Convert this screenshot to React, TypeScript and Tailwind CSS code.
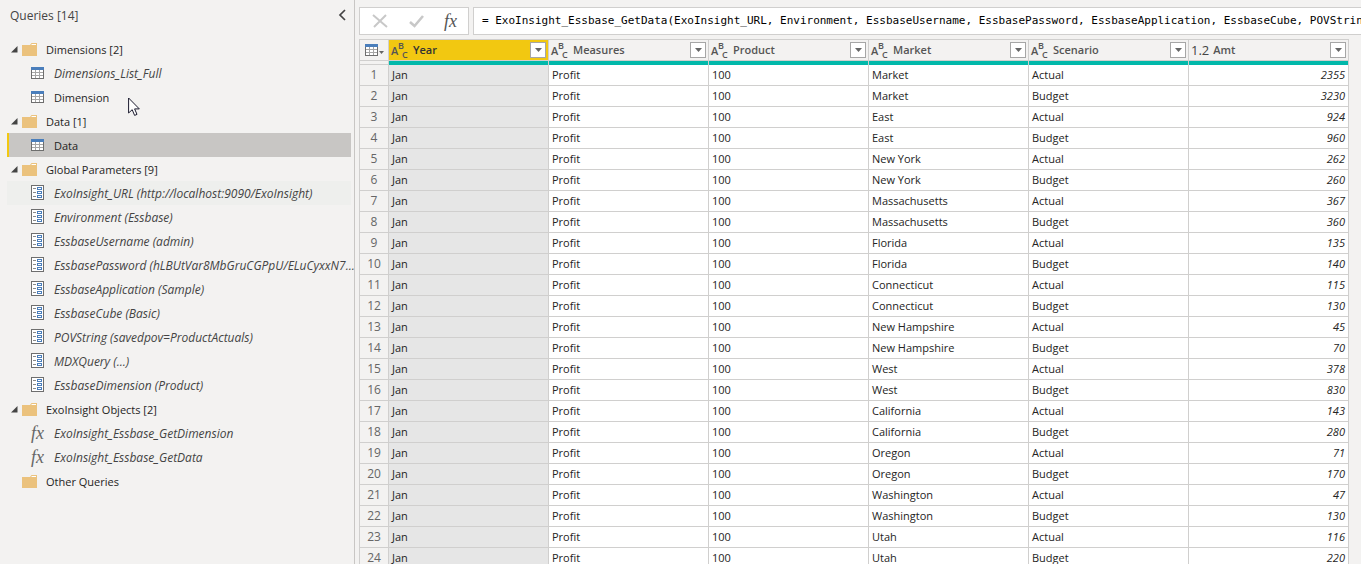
import React, { useState } from 'react';
import clsx from 'clsx';

type QueryKind = 'table' | 'param' | 'fn';

interface Query {
  name: string;
  kind: QueryKind;
  loaded?: boolean;
}

interface QueryGroup {
  title: string;
  queries: Query[];
}

const GROUPS: QueryGroup[] = [
  {
    title: 'Dimensions [2]',
    queries: [
      { name: 'Dimensions_List_Full', kind: 'table' },
      { name: 'Dimension', kind: 'table', loaded: true },
    ],
  },
  {
    title: 'Data [1]',
    queries: [{ name: 'Data', kind: 'table', loaded: true }],
  },
  {
    title: 'Global Parameters [9]',
    queries: [
      { name: 'ExoInsight_URL (http://localhost:9090/ExoInsight)', kind: 'param' },
      { name: 'Environment (Essbase)', kind: 'param' },
      { name: 'EssbaseUsername (admin)', kind: 'param' },
      { name: 'EssbasePassword (hLBUtVar8MbGruCGPpU/ELuCyxxN7...', kind: 'param' },
      { name: 'EssbaseApplication (Sample)', kind: 'param' },
      { name: 'EssbaseCube (Basic)', kind: 'param' },
      { name: 'POVString (savedpov=ProductActuals)', kind: 'param' },
      { name: 'MDXQuery (...)', kind: 'param' },
      { name: 'EssbaseDimension (Product)', kind: 'param' },
    ],
  },
  {
    title: 'ExoInsight Objects [2]',
    queries: [
      { name: 'ExoInsight_Essbase_GetDimension', kind: 'fn' },
      { name: 'ExoInsight_Essbase_GetData', kind: 'fn' },
    ],
  },
  { title: 'Other Queries', queries: [] },
];

const COLUMNS = ['Year', 'Measures', 'Product', 'Market', 'Scenario', 'Amt'];

// market, actual, budget
const MARKETS: [string, number, number][] = [
  ['Market', 2355, 3230],
  ['East', 924, 960],
  ['New York', 262, 260],
  ['Massachusetts', 367, 360],
  ['Florida', 135, 140],
  ['Connecticut', 115, 130],
  ['New Hampshire', 45, 70],
  ['West', 378, 830],
  ['California', 143, 280],
  ['Oregon', 71, 170],
  ['Washington', 47, 130],
  ['Utah', 116, 220],
];

const ROWS = MARKETS.flatMap(([market, actual, budget]) => [
  ['Jan', 'Profit', '100', market, 'Actual', String(actual)],
  ['Jan', 'Profit', '100', market, 'Budget', String(budget)],
]);

const FolderIcon = () => (
  <svg className="h-[13px] w-4 shrink-0" viewBox="0 0 16 13" aria-hidden="true">
    <path d="M0 2h8l1.5-2H15v13H0z" fill="#ebc27d" />
    <path d="M9.5 1.5h4.5" stroke="#fff" strokeWidth="1" />
  </svg>
);

const TableIcon = () => (
  <svg className="h-3 w-[13px] shrink-0" viewBox="0 0 13 12" shapeRendering="crispEdges" aria-hidden="true">
    <path d="M0 0h13v12H0z" fill="#6e6e6e" />
    <path d="M0 0h13v3H0z" fill="#4a7ebb" />
    <path d="M1 3h11v8H1z" fill="#a6a6a6" />
    <path d="M1 3h3v2H1zM5 3h3v2H5zM9 3h3v2H9zM1 6h3v2H1zM5 6h3v2H5zM9 6h3v2H9zM1 9h3v2H1zM5 9h3v2H5zM9 9h3v2H9z" fill="#fff" />
  </svg>
);

const ParamIcon = () => (
  <svg className="mb-px h-[15px] w-[13px] shrink-0" viewBox="0 0 13 15" fill="none" shapeRendering="crispEdges" aria-hidden="true">
    <path d="M.5.5h12v14H.5z" fill="#fff" stroke="#6e6e6e" />
    <path d="M2 3.5h3M2 7.5h3M2 11.5h3" stroke="#8a8a8a" />
    <path d="M6.5 2.5h4v2h-4zM6.5 6.5h4v2h-4zM6.5 10.5h4v2h-4z" stroke="#4a7ebb" />
  </svg>
);

const FxIcon = ({ className }: { className: string }) => (
  <span className={clsx("shrink-0 font-['Liberation_Serif',serif] text-[18px] leading-5 italic", className)}>fx</span>
);

const AbcIcon = () => (
  <svg className="h-[18px] w-[18px] shrink-0 overflow-visible" viewBox="0 0 18 18" aria-hidden="true">
    <text className="font-['Open_Sans',sans-serif] font-semibold" fill="#555" x="0" y="14" fontSize="11">
      A<tspan x="7" y="8" fontSize="9">B</tspan><tspan x="11" y="17" fontSize="9">C</tspan>
    </text>
  </svg>
);

const Caret = () => (
  <svg className="h-1 w-[7px]" viewBox="0 0 7 4" aria-hidden="true">
    <path d="M0 0h7L3.5 4z" fill="#666" />
  </svg>
);

const QueryIcon = ({ kind }: { kind: QueryKind }) => {
  if (kind === 'table') return <TableIcon />;
  if (kind === 'param') return <ParamIcon />;
  return <FxIcon className="w-[13px] text-[#666]" />;
};

interface SidebarProps {
  selected: string;
  onSelect: (name: string) => void;
}

const Sidebar: React.FC<SidebarProps> = ({ selected, onSelect }) => (
  <aside className="relative w-[355px] shrink-0 border-r border-[#c8c6c4] pl-[7px] pr-[3px]">
    <div className="flex h-[30px] items-center justify-between pl-[3px] pr-[5px]">
      <h2 className="pt-0.5 text-[12px] text-[#444]">Queries [14]</h2>
      <button aria-label="Collapse pane">
        <svg className="h-3 w-2" viewBox="0 0 8 12" fill="none" stroke="#444" strokeWidth="1.7">
          <path d="M7 1L2 6l5 5" />
        </svg>
      </button>
    </div>

    <ul className="pt-[7px]">
      {GROUPS.map(group => (
        <li key={group.title}>
          <button className="flex h-6 w-full items-center pl-1 text-[11px] text-[#252423]">
            <svg className="mr-1 h-[7px] w-[7px] shrink-0" viewBox="0 0 7 7" aria-hidden="true">
              {group.queries.length > 0 && <path d="M6.5 0v6.5H0z" fill="#444" />}
            </svg>
            <FolderIcon />
            <span className="ml-2 pt-0.5">{group.title}</span>
          </button>
          <ul>
            {group.queries.map(query => (
              <li key={query.name}>
                <button
                  onClick={() => onSelect(query.name)}
                  className={clsx(
                    'flex h-6 w-full items-center gap-[10px] border-l-2 pl-[22px] whitespace-nowrap',
                    query.name === selected ? 'border-[#f2c811] bg-[#c8c6c4]' : 'border-transparent',
                    query.name.startsWith('ExoInsight_URL') && 'bg-[#eeefed]',
                    query.loaded ? 'text-[11px] text-[#252423]' : 'text-[12px] text-[#444] italic'
                  )}
                >
                  <QueryIcon kind={query.kind} />
                  <span className="pt-0.5">{query.name}</span>
                </button>
              </li>
            ))}
          </ul>
        </li>
      ))}
    </ul>

    {/* pointer */}
    <svg className="absolute left-[128px] top-[97px] h-5 w-3" viewBox="0 0 12 20" aria-hidden="true">
      <path d="M.6 1v15l3.6-3.3 2.4 5.7 2.4-1-2.4-5.5h4.7z" fill="#fff" stroke="#1a1a2e" />
    </svg>
  </aside>
);

const FormulaBar = () => (
  <div className="flex h-7 shrink-0 gap-1">
    <div className="flex w-[110px] shrink-0 items-center justify-between border border-[#d0cfce] bg-white pl-3 pr-[11px]">
      <button aria-label="Cancel">
        <svg className="h-[14px] w-4" viewBox="0 0 16 14" fill="none" stroke="#c8c8c8" strokeWidth="2">
          <path d="M1 1l14 12M14 1L2 13" />
        </svg>
      </button>
      <button aria-label="Commit">
        <svg className="h-[13px] w-[15px]" viewBox="0 0 15 13" fill="none" stroke="#c8c8c8" strokeWidth="2.6">
          <path d="M1 7l4.5 4L14 1" />
        </svg>
      </button>
      <button aria-label="Insert step">
        <FxIcon className="text-[#555]" />
      </button>
    </div>
    <input
      aria-label="Formula"
      className="min-w-0 flex-1 border border-r-0 border-[#d0cfce] bg-white pl-2 font-['DejaVu_Sans_Mono',monospace] text-[11px] text-black outline-none"
      defaultValue="= ExoInsight_Essbase_GetData(ExoInsight_URL, Environment, EssbaseUsername, EssbasePassword, EssbaseApplication, EssbaseCube, POVString"
    />
  </div>
);

const DataGrid = () => (
  <table className="w-[990px] table-fixed border-separate border-spacing-0 border-l border-t border-[#d0cfce] text-[11px] leading-5 text-[#252423]">
    <colgroup>
      <col className="w-[29px]" />
      {COLUMNS.map(col => <col key={col} className="w-40" />)}
    </colgroup>
    <thead>
      <tr className="h-[21px]">
        <th className="border-b border-r border-[#d0cfce] p-0">
          <button aria-label="Table options" className="flex h-5 w-full items-center gap-px pl-[5px]">
            <TableIcon />
            <svg className="mt-1 h-[3px] w-[5px]" viewBox="0 0 5 3"><path d="M0 0h5L2.5 3z" fill="#666" /></svg>
          </button>
        </th>
        {COLUMNS.map((col, i) => (
          <th
            key={col}
            scope="col"
            className={clsx('border-b border-r border-[#d0cfce] p-0', i === 0 && 'bg-[#f2c811]')}
          >
            <div className="flex h-5 items-center pl-[2px] pr-[2px]">
              {col === 'Amt' ? <span className="text-[13px] font-normal text-[#444]">1.2</span> : <AbcIcon />}
              <span className={clsx('ml-1 flex-1 text-left font-semibold', i === 0 ? 'text-[#333]' : 'text-[#555]')}>{col}</span>
              <button
                aria-label={`Filter ${col}`}
                className="flex h-4 w-4 items-center justify-center border border-[#a6a6a6] bg-white"
              >
                <Caret />
              </button>
            </div>
          </th>
        ))}
      </tr>
      <tr className="h-1">
        <td className="h-1 border-b border-r border-[#d0cfce] p-0" />
        {COLUMNS.map(col => <td key={col} className="h-1 border-r border-[#d0cfce] bg-[#01b8aa] bg-clip-padding p-0" />)}
      </tr>
    </thead>
    <tbody>
      {ROWS.map((row, r) => (
        <tr key={r} className="h-[21px]">
          <th scope="row" className="border-b border-r border-[#d0cfce] p-0 text-center text-[12px] leading-5 font-normal text-[#666]">
            {r + 1}
          </th>
          {row.map((cell, c) => (
            <td
              key={c}
              className={clsx(
                'border-b border-r border-[#d0cfce] px-[3px] py-0',
                c === 0 ? 'bg-[#e6e6e6]' : 'bg-white',
                c === 5 && 'text-right italic'
              )}
            >
              {cell}
            </td>
          ))}
        </tr>
      ))}
    </tbody>
  </table>
);

export default function App() {
  const [selected, setSelected] = useState('Data');

  return (
    <div className="flex h-screen overflow-hidden bg-[#f3f2f1] font-['Open_Sans',sans-serif]">
      <Sidebar selected={selected} onSelect={setSelected} />
      <main className="flex min-w-0 flex-1 flex-col gap-1 overflow-hidden pl-1 pt-[7px]">
        <FormulaBar />
        <DataGrid />
      </main>
    </div>
  );
}
